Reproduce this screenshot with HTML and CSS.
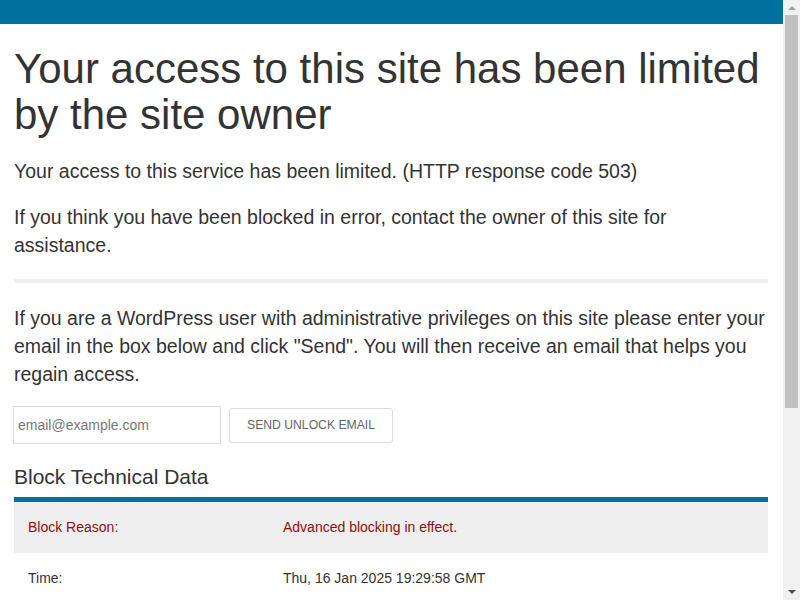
FILE: index.html
```html
<!DOCTYPE html>
<html lang="en">
<head>
    <meta charset="UTF-8">
    <meta name="viewport" content="width=device-width, initial-scale=1.0">
    <link rel="stylesheet" href="styles.css">
    <title>Your access to this site has been limited by the site owner</title>
</head>
<body>
<div class="top-bar"></div>
<div class="container">
    <h1>Your access to this site has been limited by the site owner</h1>
    <p>Your access to this service has been limited. (HTTP response code 503)</p>
    <p>If you think you have been blocked in error, contact the owner of this site for assistance.</p>
    <hr class="divider">
    <p>If you are a WordPress user with administrative privileges on this site please enter your email in the box below and click "Send". You will then receive an email that helps you regain access.</p>
    <form class="unlock-form" onsubmit="return false;">
        <input type="email" class="unlock-email" placeholder="email@example.com">
        <button type="submit" class="unlock-button">Send Unlock Email</button>
    </form>
    <h2>Block Technical Data</h2>
    <table class="block-data">
        <tr class="reason">
            <td class="label">Block Reason:</td>
            <td>Advanced blocking in effect.</td>
        </tr>
        <tr>
            <td class="label">Time:</td>
            <td>Thu, 16 Jan 2025 19:29:58 GMT</td>
        </tr>
        <tr>
            <td class="label">IP:</td>
            <td>203.0.113.42</td>
        </tr>
    </table>
    <p class="footer-note">Generated by Wordfence at Thu, 16 Jan 2025 19:29:58 GMT.<br>Your computer's time: <span id="local-time"></span>.</p>
</div>
<!-- window scrollbar, as seen in the browser -->
<div class="scrollbar">
    <span class="arrow up"></span>
    <div class="scroll-track"><div class="scroll-thumb"></div></div>
    <span class="arrow down"></span>
</div>
</body>
</html>
```

FILE: styles.css
```css
html {font-size: 14px;}
html, body {margin: 0; padding: 0;}
body {font-family: "Liberation Sans", Arial, Helvetica, sans-serif; color: #333; background: #fff; margin-right: 17px;}
.top-bar {height: 24px; background-color: #00709e;}
.container {padding: 0 15px 0 14px;}
h1 {font-size: 3rem; font-weight: normal; line-height: 46px; margin: 22px 0 19px 0;}
p {font-size: 19.5px; line-height: 28px; margin: 0 0 18px 0;}
.divider {border: 0; height: 4px; background-color: #eee; margin: 20px 0 21px 0;}
.unlock-form {display: flex; align-items: center; gap: 8px; margin: 17px 0 21px -1px;}
.unlock-email {width: 208px; height: 38px; box-sizing: border-box; border: 1px solid #ddd; padding: 0 4px; font-family: inherit; font-size: 1rem; color: #333;}
.unlock-email::placeholder {color: #777;}
.unlock-button {height: 35px; padding: 0 17px; background: #fff; border: 1px solid #ddd; border-radius: 3px; font-family: inherit; font-size: 12.2px; color: #666; text-transform: uppercase;}
h2 {font-size: 1.5rem; font-weight: normal; margin: 0 0 8px 0; line-height: 24px;}
.block-data {width: 100%; border-collapse: collapse; border-top: 5px solid #00709e; font-size: 1rem;}
.block-data td {padding: 16px 14px; line-height: 19px;}
.block-data td.label {width: 227px;}
.block-data .reason {background-color: #eee; color: #8b1111;}
.footer-note {font-size: 1rem; margin-top: 20px;}

.scrollbar {position: fixed; top: 0; right: 0; width: 17px; height: 100vh; background: #f1f1f1; display: flex; flex-direction: column; align-items: center;}
.scroll-track {flex: 1; width: 100%; display: flex; flex-direction: column; align-items: center;}
.scroll-thumb {width: 13px; height: 393px; background: #c1c1c1;}
.arrow {width: 0; height: 0; border-left: 4px solid transparent; border-right: 4px solid transparent; margin: 6px 0;}
.arrow.up {border-bottom: 4px solid #a3a3a3; margin-bottom: 5px;}
.arrow.down {border-top: 4px solid #505050; margin-top: 5px;}
```
